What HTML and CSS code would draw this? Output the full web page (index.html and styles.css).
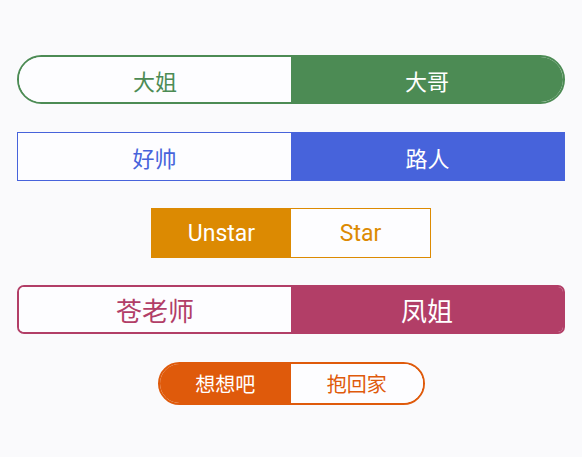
FILE: index.html
```html
<!DOCTYPE html>
<html lang="zh">
<head>
<meta charset="utf-8">
<link rel="stylesheet" href="styles.css">
</head>
<body>
<div class="page">
  <div class="seg seg-green">
    <div class="opt">大姐</div>
    <div class="opt on">大哥</div>
  </div>
  <div class="seg seg-blue">
    <div class="opt">好帅</div>
    <div class="opt on">路人</div>
  </div>
  <div class="seg seg-amber">
    <div class="opt on">Unstar</div>
    <div class="opt">Star</div>
  </div>
  <div class="seg seg-pink">
    <div class="opt">苍老师</div>
    <div class="opt on">凤姐</div>
  </div>
  <div class="seg seg-orange">
    <div class="opt on">想想吧</div>
    <div class="opt">抱回家</div>
  </div>
</div>
</body>
</html>
```

FILE: styles.css
```css
html, body {
  margin: 0;
  padding: 0;
  background: #fafafc;
}
.page {
  display: flex;
  flex-direction: column;
  align-items: center;
  padding-top: 55px;
  font-family: Roboto, "Noto Sans CJK SC", sans-serif;
}
.seg {
  display: flex;
  box-sizing: border-box;
  overflow: hidden;
  border-style: solid;
  color: var(--c);
  border-color: var(--c);
}
.opt {
  flex: 1;
  display: flex;
  align-items: center;
  justify-content: center;
  background: #fdfdff;
}
.opt.on {
  background: var(--c);
  color: #fff;
}
.seg-green {
  --c: #4c8b54;
  width: 548px;
  height: 49px;
  border-width: 2px;
  border-radius: 25px;
  font-size: 22px;
}
.seg-blue {
  --c: #4763db;
  width: 548px;
  height: 49px;
  margin-top: 28px;
  border-width: 1.5px;
  font-size: 22px;
}
.seg-amber {
  --c: #dc8a02;
  width: 280px;
  height: 50px;
  margin-top: 27px;
  border-width: 1px;
  font-size: 23px;
}
.seg-pink {
  --c: #b23e67;
  width: 548px;
  height: 49px;
  margin-top: 27px;
  border-width: 2px;
  border-radius: 7px;
  font-size: 26px;
}
.seg-orange {
  --c: #df5a0b;
  width: 267px;
  height: 43px;
  margin-top: 28px;
  border-width: 2px;
  border-radius: 22px;
  font-size: 20px;
}
```
